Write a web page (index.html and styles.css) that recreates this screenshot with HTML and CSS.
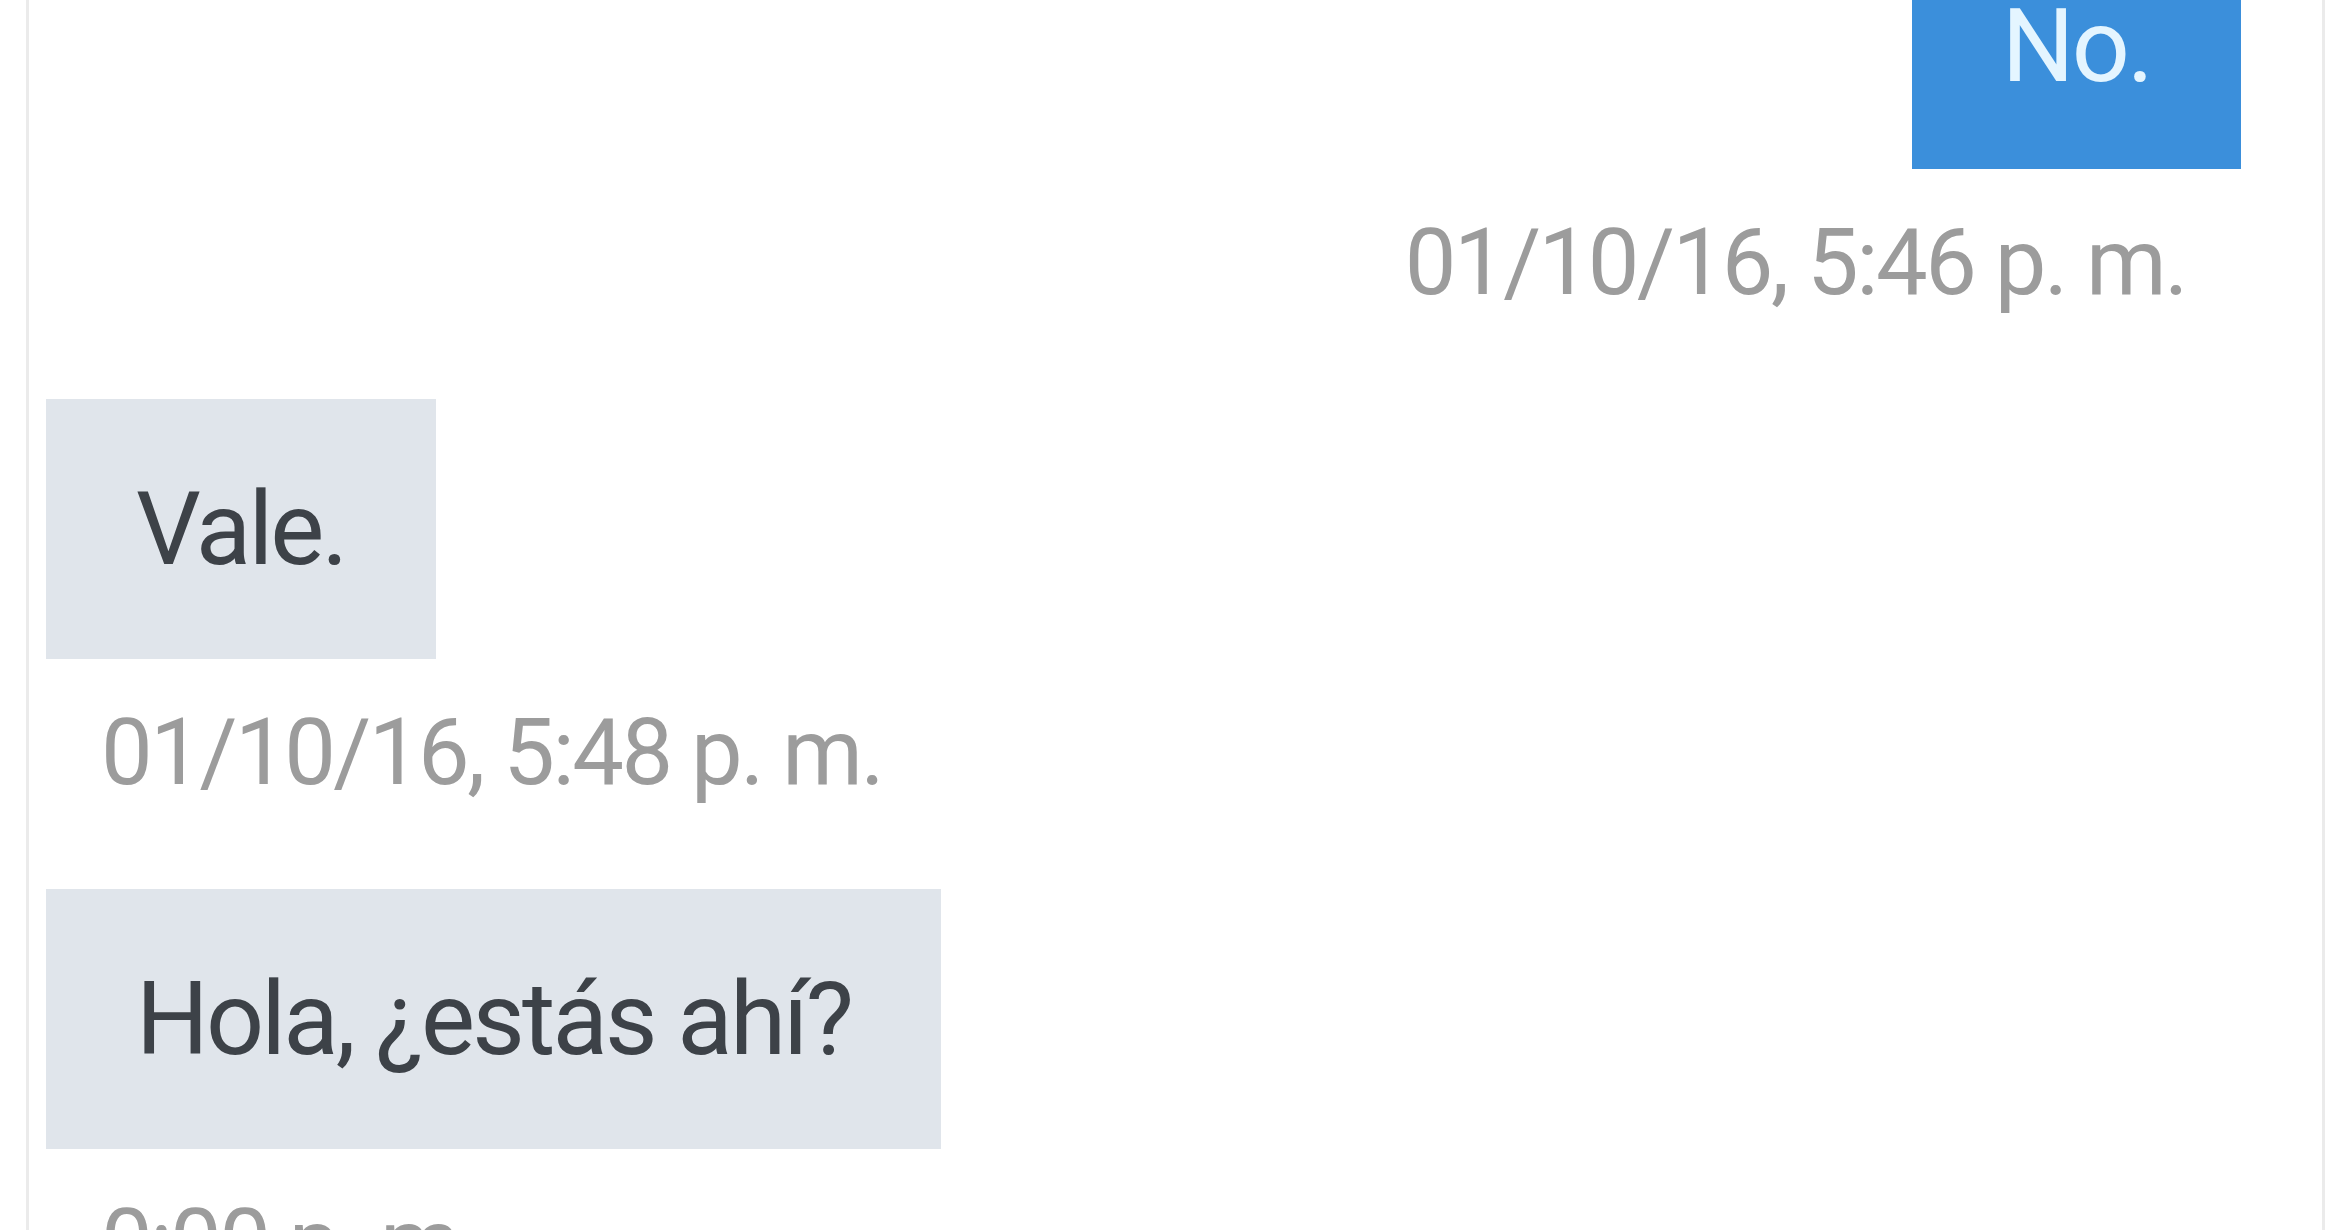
FILE: index.html
```html
<!DOCTYPE html>
<html lang="es">
<head>
    <meta charset="UTF-8">
    <meta name="viewport" content="width=device-width, initial-scale=1.0">
    <title>Conversación</title>
    <link rel="stylesheet" href="styles.css">
</head>
<body>

<div class="chat">
    <div class="messages">
        <div class="message sent">
            <div class="bubble">No.</div>
            <div class="time">01/10/16, 5:46 p. m.</div>
        </div>

        <div class="message received">
            <div class="bubble">Vale.</div>
            <div class="time">01/10/16, 5:48 p. m.</div>
        </div>

        <div class="message received">
            <div class="bubble">Hola, ¿estás ahí?</div>
            <div class="time">0:00 p. m.</div>
        </div>
    </div>
</div>

</body>
</html>
```

FILE: styles.css
```css
html, body {
    height: 100%;
}

body {
    margin: 0;
    background-color: #fff;
    font-family: Roboto, "Noto Sans", Arial, sans-serif;
    overflow: hidden;
}

.chat {
    margin: 0 25px 0 26px;
    height: 100%;
    border-left: 3px solid #ebebeb;
    border-right: 3px solid #ebebeb;
    padding: 0 81px 0 17px;
    overflow: hidden;
}

/* first bubble is scrolled partly out of view */
.messages {
    display: flex;
    flex-direction: column;
    margin-top: -91px;
}

.message {
    display: flex;
    flex-direction: column;
}

.message.sent {
    align-items: flex-end;
}

.message.received {
    align-items: flex-start;
}

.bubble {
    height: 260px;
    display: flex;
    align-items: center;
    padding: 0 90px;
    font-size: 102px;
    letter-spacing: -0.028em;
    white-space: nowrap;
}

.sent .bubble {
    height: 246px;
    padding-top: 14px;
    background-color: #3b8fdb;
    color: #e4f5ff;
}

.received .bubble {
    background-color: #e0e5eb;
    color: #3d4248;
}

.time {
    margin: 44px 55px 86px;
    font-size: 92px;
    line-height: 100px;
    letter-spacing: -0.027em;
    color: #9c9c9c;
    white-space: nowrap;
}
```
